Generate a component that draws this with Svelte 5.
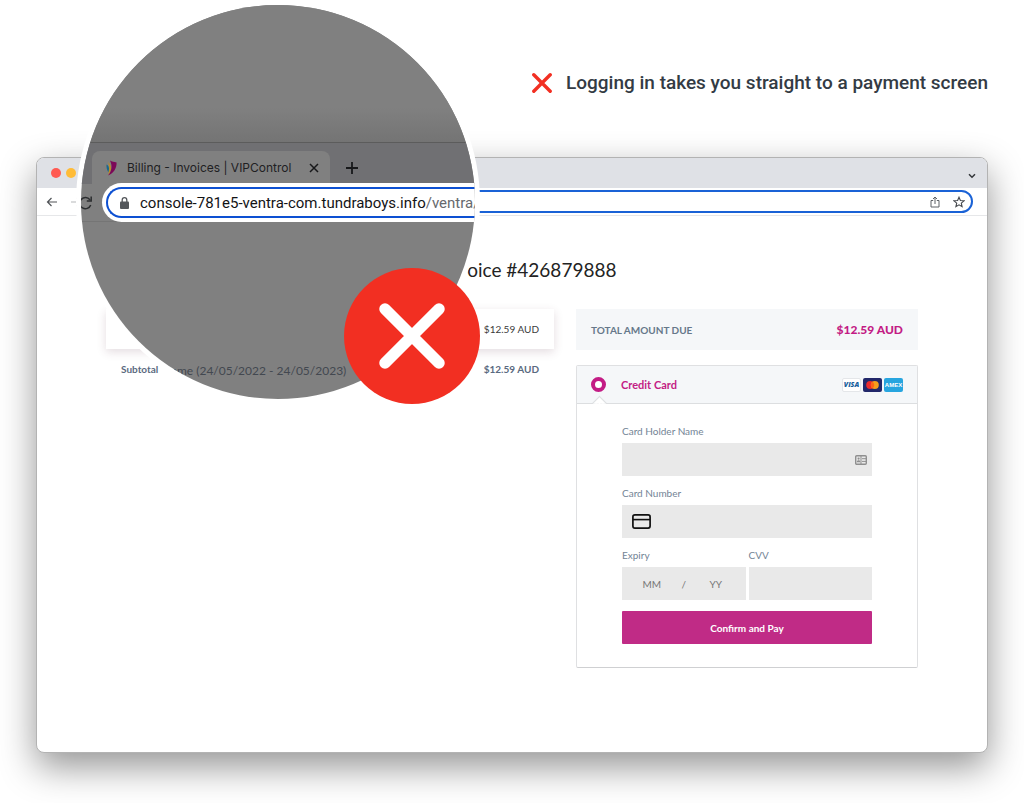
<script>
  const invoice = {
    number: '426879888',
    item: 'Name (24/05/2022 - 24/05/2023)',
    amount: '$12.59 AUD',
  };

  let address = '';
  let method = 'card';
  let card = { name: '', number: '', month: '', year: '', cvv: '' };
</script>

<main class="stage">
  <header class="caption">
    <svg width="20" height="20" viewBox="0 0 20 20" aria-hidden="true">
      <path d="M1.8 1.8 18.2 18.2M18.2 1.8 1.8 18.2" stroke="#f22f22" stroke-width="3.4" stroke-linecap="round" />
    </svg>
    <p>Logging in takes you straight to a payment screen</p>
  </header>

  <section class="window">
    <div class="tabstrip">
      <span class="dot red"></span>
      <span class="dot amber"></span>
      <span class="dot green"></span>
      <button class="icon last" aria-label="Search tabs">
        <svg width="8" height="6" viewBox="0 0 8 6"><path d="M1 1.2 4 4.2 7 1.2" fill="none" stroke="#33363a" stroke-width="1.5" /></svg>
      </button>
    </div>

    <div class="toolbar">
      <button class="icon" aria-label="Back">
        <svg width="12" height="10" viewBox="0 0 12 10"><path d="M11 5H1.5M5.5 1 1.5 5l4 4" fill="none" stroke="#505357" stroke-width="1.2" /></svg>
      </button>
      <button class="icon" aria-label="Forward">
        <svg width="12" height="10" viewBox="0 0 12 10"><path d="M1 5h9.5M6.5 1l4 4-4 4" fill="none" stroke="#b5b7ba" stroke-width="1.2" /></svg>
      </button>
      <div class="address">
        <input aria-label="Address" bind:value={address} />
        <button class="icon" aria-label="Share">
          <svg width="10" height="12" viewBox="0 0 10 12"><path d="M3.2 4.5H1v6.500h8V4.500H6.800M5 8V1.200M3 3l2-2 2 2" fill="none" stroke="#5f6368" stroke-width="1" /></svg>
        </button>
        <button class="icon" aria-label="Bookmark">
          <svg width="12" height="12" viewBox="0 0 12 12"><path d="m6 1.200 1.400 3.300 3.600.3-2.700 2.400.8 3.500L6 8.800l-3.100 1.900.8-3.500L1 4.800l3.600-.3z" fill="none" stroke="#45484d" stroke-width="1.100" /></svg>
        </button>
      </div>
    </div>

    <div class="page">
      <h1>Pay Invoice #{invoice.number}</h1>

      <div class="columns">
        <div class="summary">
          <div class="line item"><span>{invoice.amount}</span></div>
          <div class="line subtotal"><span>Subtotal</span><span>{invoice.amount}</span></div>
        </div>

        <div class="payment">
          <div class="total">
            <span>TOTAL AMOUNT DUE</span>
            <strong>{invoice.amount}</strong>
          </div>

          <form class="panel" on:submit|preventDefault>
            <div class="method">
              <input type="radio" id="method-card" value="card" bind:group={method} />
              <label for="method-card">Credit Card</label>
              <span class="brand visa">VISA</span>
              <span class="brand mastercard">
                <svg width="13" height="8" viewBox="0 0 13 8" aria-hidden="true">
                  <circle cx="4.200" cy="4" r="4" fill="#eb2a2c" />
                  <circle cx="8.800" cy="4" r="4" fill="#f79e1b" />
                  <path d="M6.500.7a4 4 0 0 1 0 6.600 4 4 0 0 1 0-6.600z" fill="#ff6416" />
                </svg>
              </span>
              <span class="brand amex">AMEX</span>
            </div>

            <div class="fields">
              <div class="field wide">
                <label for="holder">Card Holder Name</label>
                <div class="box">
                  <input id="holder" bind:value={card.name} />
                  <svg width="12" height="10" viewBox="0 0 12 10" aria-hidden="true">
                    <rect x=".7" y=".7" width="10.600" height="8.600" rx="1" fill="none" stroke="#8f8f8f" stroke-width="1.400" />
                    <path d="M6 1v8M7 3.700h4M7 6.400h4" stroke="#8f8f8f" />
                    <circle cx="3.600" cy="3.600" r="1.100" fill="#8f8f8f" />
                    <path d="M1.800 7.200c0-2.600 3.600-2.600 3.600 0z" fill="#8f8f8f" />
                  </svg>
                </div>
              </div>

              <div class="field wide">
                <label for="number">Card Number</label>
                <div class="box">
                  <svg width="19" height="15" viewBox="0 0 19 15" aria-hidden="true">
                    <rect x=".9" y=".9" width="17.200" height="13.200" rx="2" fill="none" stroke="#111" stroke-width="1.700" />
                    <path d="M1 5.600h17" stroke="#111" stroke-width="1.600" />
                  </svg>
                  <input id="number" bind:value={card.number} />
                </div>
              </div>

              <div class="field">
                <label for="month">Expiry</label>
                <div class="box expiry">
                  <input id="month" placeholder="MM" bind:value={card.month} />
                  <span>/</span>
                  <input aria-label="Expiry year" placeholder="YY" bind:value={card.year} />
                </div>
              </div>

              <div class="field">
                <label for="cvv">CVV</label>
                <div class="box"><input id="cvv" bind:value={card.cvv} /></div>
              </div>

              <button class="pay wide">Confirm and Pay</button>
            </div>
          </form>
        </div>
      </div>
    </div>
  </section>

  <div class="lens">
    <div class="backdrop"></div>
    <div class="lens-tabs">
      <div class="tab">
        <svg width="11" height="16" viewBox="0 0 11 16" aria-hidden="true">
          <path d="M.5 4.500C3 6 3.600 8 2.400 12.500 1 10 .2 7.500.5 4.500z" fill="#17698c" />
          <path d="M2 2c3.600 3 4.200 8 .4 13C3 10 4 6 2 2z" fill="#bd8d24" />
          <path d="M4 .5C6 2 8 1.800 10.600 2.500 10.800 8 8 13 2 15.500 6 11 6.500 5.500 4 .5z" fill="#7c0858" />
        </svg>
        <span>Billing - Invoices | VIPControl</span>
        <button class="icon" aria-label="Close tab">
          <svg width="10" height="10" viewBox="0 0 10 10"><path d="m1 1 8 8M9 1 1 9" stroke="#17181a" stroke-width="1.500" /></svg>
        </button>
      </div>
      <button class="icon" aria-label="New tab">
        <svg width="12" height="12" viewBox="0 0 12 12"><path d="M6 0v12M0 6h12" stroke="#17181a" stroke-width="1.800" /></svg>
      </button>
    </div>
    <div class="lens-bar">
      <button class="icon reload" aria-label="Reload">
        <svg width="21" height="14" viewBox="0 0 21 14"><path d="M8.900 3.800A5.600 5.600 0 1 0 9.700 9M10.200.6v4.400H5.800" fill="none" stroke="#2b2d2f" stroke-width="1.500" /></svg>
      </button>
      <div class="lens-address">
        <svg width="9" height="12" viewBox="0 0 9 12" aria-hidden="true">
          <rect y="4.500" width="9" height="7.500" rx="1" fill="#54575b" />
          <path d="M2.200 5V3a2.300 2.300 0 0 1 4.600 0v2" fill="none" stroke="#54575b" stroke-width="1.300" />
        </svg>
        <span class="url">console-781e5-ventra-com.tundraboys.info<span>/ventra/</span></span>
      </div>
    </div>
    <div class="lens-page">
      <p>{invoice.item}</p>
    </div>
  </div>

  <div class="alert" role="img" aria-label="Warning">
    <svg width="68" height="68" viewBox="0 0 68 68">
      <path d="M7 7 61 61M61 7 7 61" stroke="#fff" stroke-width="11.500" stroke-linecap="round" />
    </svg>
  </div>
</main>

<style>
  :global(body) {
    margin: 0;
    background: #fff;
  }

  .stage {
    position: relative;
    padding: 0 36px 50px;
    overflow: hidden;
    font-family: Lato, "Liberation Sans", sans-serif;
  }

  .caption {
    display: flex;
    justify-content: flex-end;
    align-items: center;
    gap: 14px;
    height: 93px;
    padding: 36px 0 28px;
    font: 500 19px/24px Roboto, sans-serif;
    color: #333b44;
  }

  p {
    margin: 0;
  }

  button,
  input {
    margin: 0;
    padding: 0;
    border: 0;
    background: none;
    font: inherit;
    color: inherit;
  }

  button {
    cursor: pointer;
  }

  svg {
    display: block;
    flex: none;
  }

  .window {
    border: 1px solid #b3b3b3;
    border-radius: 8px;
    background: #fff;
    box-shadow: 0 14px 36px rgba(0, 0, 0, 0.42);
  }

  .tabstrip {
    display: flex;
    align-items: center;
    gap: 5px;
    height: 30px;
    padding: 0 11px 0 14px;
    border-radius: 7px 7px 0 0;
    background: #dfe1e6;
  }

  .dot {
    width: 10px;
    height: 10px;
    border-radius: 50%;
  }

  .red {
    background: #ff5a52;
  }

  .amber {
    background: #ffbc38;
  }

  .green {
    background: #28c840;
  }

  .last {
    margin-left: auto;
    padding-top: 6px;
  }

  .toolbar {
    display: flex;
    align-items: center;
    gap: 12px;
    height: 27px;
    padding: 0 14px 0 9px;
    border-bottom: 1px solid #e6e7e9;
  }

  .address {
    flex: 1;
    display: flex;
    align-items: center;
    gap: 13px;
    height: 19px;
    margin-left: 20px;
    padding: 0 6px;
    border: 2px solid #1a62d6;
    border-radius: 12px;
  }

  .address input {
    flex: 1;
    min-width: 0;
    outline: none;
  }

  .page {
    padding: 42px 69px 84px;
  }

  h1 {
    margin: 0 0 27px;
    font-size: 19px;
    font-weight: 400;
    line-height: 24px;
    text-align: center;
    color: #232323;
  }

  .columns {
    display: grid;
    grid-template-columns: minmax(0, 1.31fr) minmax(0, 1fr);
    align-items: start;
    gap: 22px;
  }

  .line {
    display: flex;
    align-items: center;
    justify-content: flex-end;
    height: 40px;
    padding: 0 15px;
    font-size: 10px;
    color: #3b3b3b;
  }

  .item {
    box-shadow: 0 3px 9px rgba(90, 40, 60, 0.16);
  }

  .subtotal {
    justify-content: space-between;
    font-weight: 700;
    color: #5a6a80;
  }

  .total {
    display: flex;
    align-items: center;
    justify-content: space-between;
    height: 41px;
    margin-bottom: 15px;
    padding: 0 15px;
    background: #f5f7f9;
    font-size: 10px;
    font-weight: 700;
    color: #66788a;
  }

  .total strong {
    font-size: 12px;
    color: #c31c85;
  }

  .panel {
    border: 1px solid #dfe0e2;
    border-bottom-color: #cfd0d2;
    border-radius: 2px;
  }

  .method {
    position: relative;
    display: flex;
    align-items: center;
    gap: 2px;
    height: 37px;
    padding: 0 14px;
    border-bottom: 1px solid #dcdee0;
    background: #f5f7f9;
  }

  /* notch that points up at the chosen method */
  .method::after {
    content: "";
    position: absolute;
    left: 17px;
    bottom: -6px;
    width: 9px;
    height: 9px;
    border: 1px solid #dcdee0;
    border-color: #dcdee0 transparent transparent #dcdee0;
    background: linear-gradient(135deg, #fff 55%, transparent 55%);
    transform: rotate(45deg);
  }

  .method input {
    appearance: none;
    width: 15px;
    height: 15px;
    border: 4px solid #c31c85;
    border-radius: 50%;
    background: #fff;
  }

  .method label {
    flex: 1;
    padding-left: 13px;
    font-size: 11px;
    font-weight: 700;
    color: #c31c85;
  }

  .brand {
    display: grid;
    place-items: center;
    box-sizing: border-box;
    width: 19px;
    height: 14px;
    border-radius: 2px;
    font: italic 800 7px/7px "Open Sans", sans-serif;
  }

  .visa {
    border: 1px solid #e4e6e9;
    background: #fff;
    color: #17609c;
  }

  .mastercard {
    background: #22286a;
  }

  .amex {
    background: #27a5df;
    font: 700 6px/6px "Liberation Sans", sans-serif;
    color: #fff;
  }

  .fields {
    display: grid;
    grid-template-columns: minmax(0, 1fr) minmax(0, 1fr);
    gap: 9px 3px;
    padding: 19px 45px 23px;
  }

  .wide {
    grid-column: 1 / -1;
  }

  .field label {
    display: block;
    margin-bottom: 4px;
    font-size: 10px;
    line-height: 16px;
    color: #738495;
  }

  .box {
    display: flex;
    align-items: center;
    height: 33px;
    padding: 0 5px 0 10px;
    background: #e9e9e9;
  }

  .box input {
    flex: 1;
    min-width: 0;
    height: 100%;
    outline: none;
  }

  .expiry {
    padding: 0;
    font-size: 10px;
    color: #777;
  }

  .expiry input {
    text-align: center;
  }

  .expiry input::placeholder {
    color: #777;
    opacity: 1;
  }

  .pay {
    height: 33px;
    margin-top: 2px;
    border-radius: 1px;
    background: #c02b86;
    font-size: 10px;
    font-weight: 700;
    color: #fff;
  }

  .lens {
    position: absolute;
    top: 5px;
    left: 81px;
    display: flex;
    flex-direction: column;
    width: 394px;
    height: 394px;
    overflow: hidden;
    border-radius: 50%;
    background: #808080;
    box-shadow: 0 0 0 5px #fff;
    font-family: Inter, "Liberation Sans", sans-serif;
  }

  .backdrop {
    height: 137px;
    border-bottom: 1px solid #5c5c5c;
    background: linear-gradient(#808080 75%, #747474);
  }

  .lens-tabs {
    display: flex;
    align-items: flex-end;
    gap: 16px;
    height: 41px;
    padding-left: 11px;
    background: #707073;
  }

  .lens-tabs > .icon {
    height: 33px;
  }

  .tab {
    display: flex;
    align-items: center;
    gap: 10px;
    box-sizing: border-box;
    width: 238px;
    height: 33px;
    padding: 0 11px 0 14px;
    border-radius: 8px 8px 0 0;
    background: #808080;
    font-size: 12px;
    color: #1f2023;
  }

  .tab span {
    flex: 1;
    white-space: nowrap;
  }

  .lens-bar {
    display: flex;
    align-items: center;
    height: 37px;
    border-bottom: 1px solid #757575;
  }

  .lens-address {
    flex: 1;
    display: flex;
    align-items: center;
    gap: 11px;
    height: 27px;
    padding-left: 12px;
    border: 2px solid #0d50d2;
    border-right: 0;
    border-radius: 16px 0 0 16px;
    background: #fff;
    box-shadow: 0 0 0 4px #fff;
    margin-left: 4px;
  }

  .url {
    font-family: Roboto, sans-serif;
    font-size: 15px;
    white-space: nowrap;
    color: #131416;
  }

  .url span {
    color: #66696d;
  }

  .lens-page {
    padding: 139px 0 0 81px;
    font: 12px/20px Lato, sans-serif;
    color: #434850;
  }

  .alert {
    position: absolute;
    top: 268px;
    left: 344px;
    display: grid;
    place-items: center;
    width: 136px;
    height: 136px;
    border-radius: 50%;
    background: #f22f22;
  }
</style>
